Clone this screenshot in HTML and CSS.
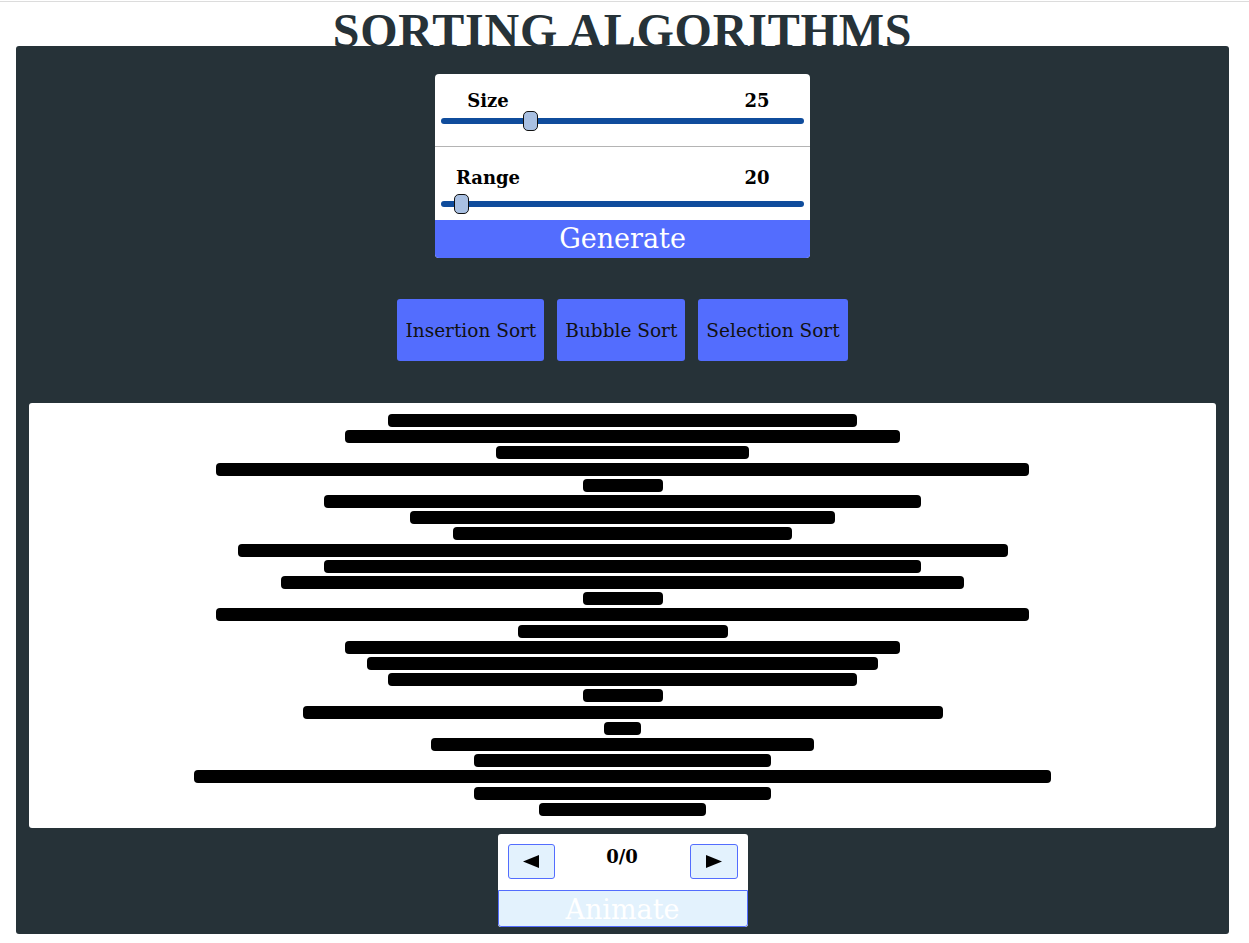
FILE: index.html
```html
<!DOCTYPE html>
<html lang="en">
<head>
<meta charset="utf-8">
<title>Sorting Algorithms</title>
<link rel="stylesheet" href="styles.css">
</head>
<body>
<div class="topline"></div>
<h1 class="title">SORTING ALGORITHMS</h1>
<main class="panel">
  <section class="controls">
    <div class="ctl ctl-size">
      <div class="ctl-head"><span class="ctl-label">Size</span><span class="ctl-value">25</span></div>
      <div class="slider"><div class="track"></div><div class="thumb" style="left: calc((100% - 15px) * 0.2356)"></div></div>
    </div>
    <div class="ctl ctl-range">
      <div class="ctl-head"><span class="ctl-label">Range</span><span class="ctl-value">20</span></div>
      <div class="slider"><div class="track"></div><div class="thumb" style="left: calc((100% - 15px) * 0.037)"></div></div>
    </div>
    <button class="generate">Generate</button>
  </section>

  <div class="algos">
    <button class="algo">Insertion Sort</button>
    <button class="algo">Bubble Sort</button>
    <button class="algo">Selection Sort</button>
  </div>

  <div class="canvas">
    <div class="bar" style="width:469px"></div>
    <div class="bar" style="width:555px"></div>
    <div class="bar" style="width:253px"></div>
    <div class="bar" style="width:813px"></div>
    <div class="bar" style="width:80px"></div>
    <div class="bar" style="width:597px"></div>
    <div class="bar" style="width:425px"></div>
    <div class="bar" style="width:339px"></div>
    <div class="bar" style="width:770px"></div>
    <div class="bar" style="width:597px"></div>
    <div class="bar" style="width:683px"></div>
    <div class="bar" style="width:80px"></div>
    <div class="bar" style="width:813px"></div>
    <div class="bar" style="width:210px"></div>
    <div class="bar" style="width:555px"></div>
    <div class="bar" style="width:511px"></div>
    <div class="bar" style="width:469px"></div>
    <div class="bar" style="width:80px"></div>
    <div class="bar" style="width:640px"></div>
    <div class="bar" style="width:37px"></div>
    <div class="bar" style="width:383px"></div>
    <div class="bar" style="width:297px"></div>
    <div class="bar" style="width:857px"></div>
    <div class="bar" style="width:297px"></div>
    <div class="bar" style="width:167px"></div>
  </div>

  <div class="player">
    <div class="player-top">
      <button class="step step-prev" aria-label="Previous"><svg width="16" height="13" viewBox="0 0 16 13"><polygon points="0,6.5 16,0 16,13" fill="#000"/></svg></button>
      <span class="counter">0/0</span>
      <button class="step step-next" aria-label="Next"><svg width="16" height="13" viewBox="0 0 16 13"><polygon points="16,6.5 0,0 0,13" fill="#000"/></svg></button>
    </div>
    <button class="animate">Animate</button>
  </div>
</main>
</body>
</html>
```

FILE: styles.css
```css
html, body {
  margin: 0;
  padding: 0;
  background: #ffffff;
}

body {
  font-family: "DejaVu Serif", "Liberation Serif", serif;
  color: #000;
}

.topline {
  height: 1px;
  margin-top: 1px;
  background: #dcdcdc;
}

.title {
  margin: 12px 20px 0 16px;
  height: 32px;
  line-height: 34px;
  text-align: center;
  font-family: "Liberation Serif", "DejaVu Serif", serif;
  font-weight: bold;
  font-size: 48px;
  letter-spacing: 0.8px;
  color: #263238;
  white-space: nowrap;
}

.panel {
  position: relative;
  margin: 0 20px 0 16px;
  padding: 28px 0 7px;
  background: #263238;
  border-radius: 3px;
}

/* controls card */
.controls {
  width: 375px;
  margin: 0 auto;
  background: #fff;
  border-radius: 4px;
  overflow: hidden;
}

.ctl-size {
  padding: 16px 0 15px;
  border-bottom: 1px solid #b4b4b4;
}

.ctl-range {
  padding: 20px 0 6px;
}

.ctl-head {
  display: grid;
  grid-template-columns: 106px 1fr 106px;
  height: 21px;
  line-height: 21px;
  font-weight: bold;
  font-size: 18px;
}

.ctl-label {
  grid-column: 1;
  text-align: center;
}

.ctl-value {
  grid-column: 3;
  text-align: center;
}

.ctl-range .ctl-head {
  margin-bottom: 6px;
}

.slider {
  position: relative;
  height: 20px;
  margin: 0 6px;
}

.track {
  position: absolute;
  left: 0;
  right: 0;
  top: 7px;
  height: 6px;
  border-radius: 3px;
  background: #0f4c9c;
}

.thumb {
  position: absolute;
  top: 0;
  width: 15px;
  height: 20px;
  box-sizing: border-box;
  border: 1px solid #111;
  border-radius: 5px;
  background: #a9c0e2;
}

.generate {
  display: block;
  width: 100%;
  height: 38px;
  padding: 0;
  border: none;
  background: #536dfe;
  color: #fff;
  font-family: "DejaVu Serif", "Liberation Serif", serif;
  font-size: 27px;
  line-height: 38px;
}

/* algorithm buttons */
.algos {
  display: flex;
  justify-content: center;
  gap: 13px;
  margin-top: 41px;
}

.algo {
  height: 62px;
  padding: 0 8px;
  border: none;
  border-radius: 3px;
  background: #536dfe;
  color: #111;
  font-family: "DejaVu Serif", "Liberation Serif", serif;
  font-size: 18.5px;
}

/* bars canvas */
.canvas {
  box-sizing: border-box;
  height: 425px;
  margin: 42px 13px 0;
  padding-top: 11px;
  background: #fff;
  border-radius: 3px;
  display: flex;
  flex-direction: column;
  align-items: center;
  gap: 3.21px;
}

.bar {
  height: 13px;
  flex: none;
  background: #000;
  border-radius: 4px;
}

/* player */
.player {
  width: 250px;
  margin: 6px auto 0;
  background: #fff;
  border-radius: 3px;
  overflow: hidden;
}

.player-top {
  height: 56px;
  box-sizing: border-box;
  padding: 10px 10px 0;
  display: flex;
  justify-content: space-between;
  align-items: flex-start;
}

.step {
  height: 35px;
  padding: 0;
  border: 1px solid #536dfe;
  border-radius: 3px;
  background: #e3f2fd;
  display: flex;
  align-items: center;
  justify-content: center;
}

.step-prev {
  width: 47px;
}

.step-next {
  width: 48px;
}

.step svg {
  display: block;
}

.counter {
  font-weight: bold;
  font-size: 18px;
  line-height: 26px;
}

.animate {
  display: block;
  width: 100%;
  height: 37px;
  padding: 0;
  border: 1px solid #536dfe;
  border-radius: 0 0 3px 3px;
  background: #e3f2fd;
  color: #fff;
  font-family: "DejaVu Serif", "Liberation Serif", serif;
  font-size: 27px;
  line-height: 38px;
}
```
